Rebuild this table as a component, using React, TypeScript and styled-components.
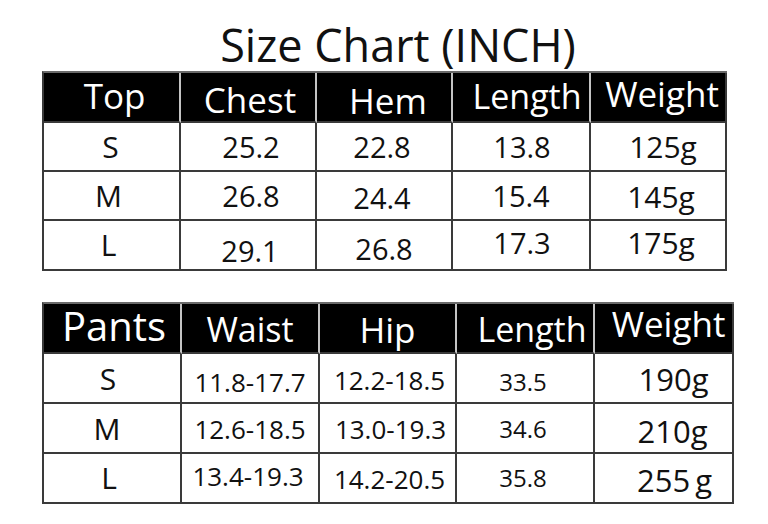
import styled, { createGlobalStyle } from "styled-components";

type Spec = { t: string; s: number; x?: number; y?: number; k?: number; gap?: boolean };

type Chart = {
  cols: number[];
  rows: number[];
  cells: Spec[][];
};

const GlobalStyle = createGlobalStyle`
  html, body {
    margin: 0;
    padding: 0;
    background: #ffffff;
  }
  body {
    font-family: "Open Sans", "Noto Sans", "Liberation Sans", sans-serif;
    color: #111111;
  }
`;

const Page = styled.div`
  width: 768px;
  height: 524px;
  box-sizing: border-box;
  padding: 21px 0 0 42px;
  display: flex;
  flex-direction: column;
  overflow: hidden;
`;

const Title = styled.h1`
  margin: 0 0 2px 0;
  width: 686px;
  padding-left: 26px;
  box-sizing: border-box;
  height: 48px;
  line-height: 48px;
  font-size: 45px;
  font-weight: 400;
  text-align: center;
  color: #111111;
  white-space: nowrap;
`;

const Sheet = styled.div<{ $cols: number[]; $rows: number[] }>`
  display: grid;
  grid-template-columns: ${({ $cols }) => $cols.map((c) => `${c}px`).join(" ")};
  grid-template-rows: ${({ $rows }) => $rows.map((r) => `${r}px`).join(" ")};
  width: max-content;
  border-left: 2px solid #3a3a3a;
  border-top: 2px solid #6a6a6a;
  & + & {
    margin-top: 31px;
  }
`;

const Cell = styled.div<{ $head: boolean; $size: number; $dx: number; $dy: number; $k: number }>`
  box-sizing: border-box;
  display: flex;
  align-items: center;
  justify-content: center;
  white-space: nowrap;
  line-height: 1;
  font-size: ${({ $size }) => $size}px;
  letter-spacing: ${({ $k }) => $k}px;
  background: ${({ $head }) => ($head ? "#000000" : "#ffffff")};
  color: ${({ $head }) => ($head ? "#ffffff" : "#111111")};
  border-right: 2px solid ${({ $head }) => ($head ? "#c4c4c4" : "#3a3a3a")};
  border-bottom: 2px solid #3a3a3a;
  padding: ${({ $dx, $dy }) =>
    `${Math.max(0, 2 * $dy)}px ${Math.max(0, -2 * $dx)}px ${Math.max(0, -2 * $dy)}px ${Math.max(0, 2 * $dx)}px`};
  &:nth-child(5n) {
    border-right-color: #3a3a3a;
  }
`;

const Unit = styled.span`
  margin-left: 5px;
`;

const topChart: Chart = {
  cols: [137, 136, 136, 138, 136],
  rows: [50, 49, 49, 50],
  cells: [
    [
      { t: "Top", s: 35, x: 3, y: -2 },
      { t: "Chest", s: 35, x: 2, y: 2 },
      { t: "Hem", s: 35, x: 4, y: 3 },
      { t: "Length", s: 34, x: 6, y: -1 },
      { t: "Weight", s: 35, x: 4, y: -4 },
    ],
    [
      { t: "S", s: 30, x: -1 },
      { t: "25.2", s: 29, x: 3 },
      { t: "22.8", s: 29, x: -2 },
      { t: "13.8", s: 29, x: 1 },
      { t: "125g", s: 30, x: 5 },
    ],
    [
      { t: "M", s: 30, x: -3 },
      { t: "26.8", s: 29, x: 3 },
      { t: "24.4", s: 29, x: -2, y: 2 },
      { t: "15.4", s: 29 },
      { t: "145g", s: 30, x: 3, y: 1 },
    ],
    [
      { t: "L", s: 30, x: -3 },
      { t: "29.1", s: 29, x: 2, y: 5 },
      { t: "26.8", s: 29, y: 3 },
      { t: "17.3", s: 29, x: 1, y: -3 },
      { t: "175g", s: 30, x: 3, y: -2 },
    ],
  ],
};

const pantsChart: Chart = {
  cols: [138, 138, 137, 138, 139],
  rows: [50, 50, 50, 50],
  cells: [
    [
      { t: "Pants", s: 40, x: 2, y: -2 },
      { t: "Waist", s: 34, y: 1 },
      { t: "Hip", s: 35, y: 1 },
      { t: "Length", s: 34, x: 7, y: 1 },
      { t: "Weight", s: 35, x: 5, y: -5 },
    ],
    [
      { t: "S", s: 30, x: -4, y: 1 },
      { t: "11.8-17.7", s: 26, y: 4 },
      { t: "12.2-18.5", s: 26, x: 2, y: 2 },
      { t: "33.5", s: 24, x: -2, y: 4 },
      { t: "190g", s: 31, x: 10, y: 1 },
    ],
    [
      { t: "M", s: 30, x: -5, y: 1 },
      { t: "12.6-18.5", s: 26, y: 1 },
      { t: "13.0-19.3", s: 26, x: 3, y: 1 },
      { t: "34.6", s: 24, x: -2, y: 1 },
      { t: "210g", s: 31, x: 9, y: 3 },
    ],
    [
      { t: "L", s: 30, x: -3 },
      { t: "13.4-19.3", s: 26, x: -2, y: -2 },
      { t: "14.2-20.5", s: 26, x: 2, y: 1 },
      { t: "35.8", s: 24, x: -2 },
      { t: "255", s: 31, x: 11, y: 2, gap: true },
    ],
  ],
};

const SizeTable = ({ chart }: { chart: Chart }) => (
  <Sheet $cols={chart.cols} $rows={chart.rows}>
    {chart.cells.map((row, r) =>
      row.map((c, i) => (
        <Cell
          key={`${r}-${i}`}
          $head={r === 0}
          $size={c.s}
          $dx={c.x ?? 0}
          $dy={c.y ?? 0}
          $k={c.k ?? 0}
        >
          {c.t}
          {c.gap && <Unit>g</Unit>}
        </Cell>
      ))
    )}
  </Sheet>
);

export default function App() {
  return (
    <>
      <GlobalStyle />
      <Page>
        <Title>Size Chart (INCH)</Title>
        <SizeTable chart={topChart} />
        <SizeTable chart={pantsChart} />
      </Page>
    </>
  );
}
